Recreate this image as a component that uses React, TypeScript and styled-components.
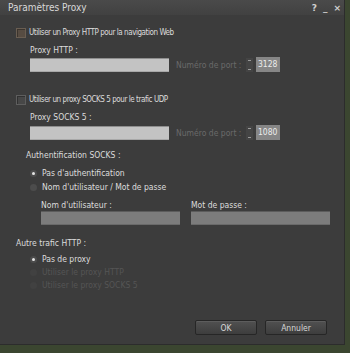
import React from 'react'
import styled, { createGlobalStyle, css } from 'styled-components'

const GlobalStyle = createGlobalStyle`
  html, body {
    margin: 0;
    padding: 0;
    width: 350px;
    height: 353px;
    overflow: hidden;
    background: #3b4630;
  }
  * {
    box-sizing: border-box;
  }
`

const textStyles = css`
  font-family: 'DejaVu Sans Condensed', 'DejaVu Sans', sans-serif;
  font-size: 8.5px;
  line-height: 12px;
  height: 12px;
  white-space: nowrap;
`

const Dialog = styled.div`
  width: 345px;
  height: 345px;
  background: #3c3c3c;
  border-right: 1px solid #2c2c2c;
  border-bottom: 1px solid #2c2c2c;
  display: flex;
  flex-direction: column;
  color: #dcdcdc;
`

const TitleBar = styled.header`
  height: 15px;
  display: flex;
  align-items: center;
  justify-content: space-between;
  padding: 0 3px 0 8px;
  background: linear-gradient(#4a4a4a, #414141);
`

const Title = styled.span`
  font-family: 'DejaVu Sans Condensed', 'DejaVu Sans', sans-serif;
  font-size: 10px;
  color: #d8d8d8;
`

const TitleControls = styled.div`
  display: flex;
  gap: 6px;
  font-family: 'DejaVu Sans', sans-serif;
  font-size: 9px;
  font-weight: bold;
  color: #cfcfcf;
`

const Body = styled.div`
  display: flex;
  flex-direction: column;
  padding-left: 16px;
`

const Row = styled.div<{ $top: number; $indent?: number }>`
  display: flex;
  align-items: center;
  margin-top: ${({ $top }) => $top}px;
  padding-left: ${({ $indent }) => $indent ?? 0}px;
`

const Label = styled.span<{ $dim?: boolean; $faint?: boolean }>`
  ${textStyles}
  color: ${({ $dim, $faint }) => ($faint ? '#555555' : $dim ? '#6e6e6e' : '#dcdcdc')};
`

const CheckLabel = styled.span`
  ${textStyles}
  font-size: 8px;
  letter-spacing: -0.45px;
  color: #dcdcdc;
`

const Checkbox = styled.span<{ $warm?: boolean }>`
  width: 10px;
  height: 10px;
  margin-right: 3px;
  border: 1px solid ${({ $warm }) => ($warm ? '#6a5e52' : '#5e5e5e')};
  background: ${({ $warm }) => ($warm ? '#574c42' : '#474747')};
  box-shadow: inset 1px 1px 0 rgba(0, 0, 0, 0.3);
`

const Radio = styled.span<{ $checked?: boolean; $faint?: boolean }>`
  width: 7px;
  height: 7px;
  border-radius: 50%;
  margin-right: 5px;
  margin-left: -3px;
  background: ${({ $faint }) => ($faint ? '#414141' : '#4c4c4c')};
  display: flex;
  align-items: center;
  justify-content: center;
  &::after {
    content: '';
    width: 3px;
    height: 3px;
    border-radius: 50%;
    background: ${({ $checked }) => ($checked ? '#e4e4e4' : 'transparent')};
  }
`

const TextInput = styled.div<{ $width: number; $disabled?: boolean }>`
  width: ${({ $width }) => $width}px;
  height: 14px;
  background: ${({ $disabled }) => ($disabled ? '#7c7c7c' : '#c3c3c3')};
  border-top: 1px solid ${({ $disabled }) => ($disabled ? '#5c5c5c' : '#8e8e8e')};
  border-bottom: 1px solid ${({ $disabled }) => ($disabled ? '#6a6a6a' : '#a8a8a8')};
`

const PortLabel = styled.span`
  ${textStyles}
  color: #6a6a6a;
  margin-left: 7px;
  width: 70px;
`

const Spinner = styled.div`
  width: 7px;
  height: 14px;
  display: flex;
  flex-direction: column;
  justify-content: space-between;
  align-items: center;
  padding: 2px 0;
  background: #444444;
  margin-right: 3px;
  &::before,
  &::after {
    content: '';
    width: 3px;
    height: 1px;
    background: #9a9a9a;
  }
`

const PortBox = styled.div`
  ${textStyles}
  width: 24px;
  height: 15px;
  line-height: 15px;
  padding-left: 2px;
  background: #868686;
  color: #ececec;
`

const FieldColumn = styled.div<{ $width: number }>`
  display: flex;
  flex-direction: column;
  width: ${({ $width }) => $width}px;
`

const Footer = styled.div`
  display: flex;
  justify-content: flex-end;
  gap: 8px;
  margin-top: 29px;
  padding-right: 17px;
`

const Button = styled.button`
  width: 62px;
  height: 15px;
  padding: 0;
  border: 1px solid #262626;
  border-radius: 2px;
  background: linear-gradient(#515151, #3d3d3d);
  box-shadow: inset 0 1px 0 rgba(255, 255, 255, 0.08);
  color: #d8d8d8;
  font-family: 'DejaVu Sans Condensed', 'DejaVu Sans', sans-serif;
  font-size: 8.5px;
  line-height: 12px;
`

const App = () => (
  <>
    <GlobalStyle />
    <Dialog>
      <TitleBar>
        <Title>Paramètres Proxy</Title>
        <TitleControls>
          <span>?</span>
          <span>_</span>
          <span>×</span>
        </TitleControls>
      </TitleBar>
      <Body>
        <Row $top={12}>
          <Checkbox $warm />
          <CheckLabel>Utiliser un Proxy HTTP pour la navigation Web</CheckLabel>
        </Row>
        <Row $top={5} $indent={14}>
          <Label>Proxy HTTP :</Label>
        </Row>
        <Row $top={1} $indent={14}>
          <TextInput $width={139} />
          <PortLabel>Numéro de port :</PortLabel>
          <Spinner />
          <PortBox>3128</PortBox>
        </Row>
        <Row $top={22}>
          <Checkbox />
          <CheckLabel>Utiliser un proxy SOCKS 5 pour le trafic UDP</CheckLabel>
        </Row>
        <Row $top={5} $indent={14}>
          <Label>Proxy SOCKS 5 :</Label>
        </Row>
        <Row $top={2} $indent={14}>
          <TextInput $width={139} />
          <PortLabel>Numéro de port :</PortLabel>
          <Spinner />
          <PortBox>1080</PortBox>
        </Row>
        <Row $top={9} $indent={10}>
          <Label>Authentification SOCKS :</Label>
        </Row>
        <Row $top={6} $indent={17}>
          <Radio $checked />
          <Label>Pas d'authentification</Label>
        </Row>
        <Row $top={2} $indent={17}>
          <Radio />
          <Label>Nom d'utilisateur / Mot de passe</Label>
        </Row>
        <Row $top={6} $indent={25}>
          <FieldColumn $width={150}>
            <Label>Nom d'utilisateur :</Label>
            <TextInput $width={139} $disabled />
          </FieldColumn>
          <FieldColumn $width={139}>
            <Label>Mot de passe :</Label>
            <TextInput $width={139} $disabled />
          </FieldColumn>
        </Row>
        <Row $top={12}>
          <Label>Autre trafic HTTP :</Label>
        </Row>
        <Row $top={4} $indent={17}>
          <Radio $checked />
          <Label>Pas de proxy</Label>
        </Row>
        <Row $top={1} $indent={17}>
          <Radio $faint />
          <Label $faint>Utiliser le proxy HTTP</Label>
        </Row>
        <Row $top={1} $indent={17}>
          <Radio $faint />
          <Label $faint>Utiliser le proxy SOCKS 5</Label>
        </Row>
      </Body>
      <Footer>
        <Button>OK</Button>
        <Button>Annuler</Button>
      </Footer>
    </Dialog>
  </>
)

export default App
